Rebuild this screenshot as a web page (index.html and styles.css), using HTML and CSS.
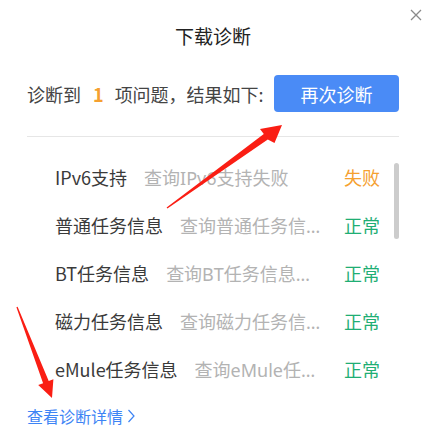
FILE: index.html
```html
<!DOCTYPE html>
<html lang="zh-CN">
<head>
<meta charset="utf-8">
<title>下载诊断</title>
<link rel="stylesheet" href="styles.css">
</head>
<body>
<div class="dialog">
  <button class="close" aria-label="关闭">
    <svg width="12" height="12" viewBox="0 0 12 12"><path d="M1 1L11 11M11 1L1 11" stroke="#8a8a8a" stroke-width="1.3" fill="none"/></svg>
  </button>
  <h1 class="title">下载诊断</h1>
  <div class="summary">
    <p class="summary-text">诊断到<span class="count">1</span>项问题，结果如下:</p>
    <button class="retry">再次诊断</button>
  </div>
  <div class="list">
    <ul class="rows">
      <li class="row"><span class="name">IPv6支持</span><span class="desc">查询IPv6支持失败</span><span class="status fail">失败</span></li>
      <li class="row"><span class="name">普通任务信息</span><span class="desc">查询普通任务信息成功</span><span class="status ok">正常</span></li>
      <li class="row"><span class="name">BT任务信息</span><span class="desc">查询BT任务信息成功</span><span class="status ok">正常</span></li>
      <li class="row"><span class="name">磁力任务信息</span><span class="desc">查询磁力任务信息成功</span><span class="status ok">正常</span></li>
      <li class="row"><span class="name">eMule任务信息</span><span class="desc">查询eMule任务信息成功</span><span class="status ok">正常</span></li>
    </ul>
    <div class="scrollbar"><div class="thumb"></div></div>
  </div>
  <a class="detail-link" href="#">查看诊断详情<svg class="chev" width="8" height="14" viewBox="0 0 8 14"><path d="M1.5 1L7 7L1.5 13" stroke="#3d84f5" stroke-width="1.2" fill="none"/></svg></a>
  <svg class="annotations" width="426" height="428" viewBox="0 0 426 428">
    <polygon fill="#fa1e14" points="166.6,207.5 263.8,133.9 260,129 282,125 274.5,143 267.8,139.5 167.4,208.5"/>
    <polygon fill="#fa1e14" points="16.4,307.2 17.6,306.8 48.7,381 53.4,379.2 52,398 38.2,385 43.1,383.2"/>
  </svg>
</div>
</body>
</html>
```

FILE: styles.css
```css
html, body {
  margin: 0;
  padding: 0;
  background: #ffffff;
}
body {
  width: 426px;
  height: 428px;
  overflow: hidden;
  font-family: "Noto Sans CJK SC", "Noto Sans", sans-serif;
}
.dialog {
  position: relative;
  width: 426px;
  height: 428px;
  padding: 0 27px;
  box-sizing: border-box;
}
.close {
  position: absolute;
  top: 8px;
  right: 3px;
  width: 14px;
  height: 14px;
  padding: 0;
  border: 0;
  background: none;
  display: flex;
  align-items: center;
  justify-content: center;
}
.title {
  margin: 0;
  padding-top: 24px;
  font-size: 19px;
  line-height: 24px;
  font-weight: normal;
  color: #222;
  text-align: center;
}
.summary {
  margin-top: 27px;
  display: flex;
  align-items: center;
  justify-content: space-between;
  padding-bottom: 24px;
  border-bottom: 1px solid #e6e6e6;
}
.summary-text {
  margin: 0;
  font-size: 18px;
  line-height: 24px;
  color: #444;
}
.count {
  color: #f5a030;
  font-weight: bold;
  padding: 0 11px 0 12px;
}
.retry {
  width: 125px;
  height: 37px;
  border: 0;
  border-radius: 4px;
  background: #4a8bf6;
  color: #fff;
  font-family: inherit;
  font-size: 18px;
  padding: 0;
}
.list {
  position: relative;
  padding-top: 16px;
}
.rows {
  list-style: none;
  margin: 0;
  padding: 0;
}
.row {
  display: flex;
  align-items: center;
  height: 48px;
  padding: 0 19px 0 28px;
  font-size: 18px;
  white-space: nowrap;
}
.name {
  color: #3a3a3a;
  flex: none;
}
.desc {
  flex: 1;
  min-width: 0;
  margin: 0 18px 0 17px;
  color: #b3b3b3;
  font-family: "Noto Sans", "Noto Sans CJK SC", sans-serif;
  overflow: hidden;
  text-overflow: ellipsis;
}
.status {
  flex: none;
  width: 36px;
}
.status.fail { color: #f5a030; }
.status.ok { color: #1fae74; }
.scrollbar {
  position: absolute;
  top: 26px;
  right: 0;
  width: 5px;
  height: 76px;
}
.thumb {
  height: 100%;
  border-radius: 3px;
  background: #cccccc;
}
.detail-link {
  display: inline-flex;
  align-items: center;
  gap: 4px;
  margin-top: 13px;
  font-size: 16px;
  line-height: 20px;
  color: #3d84f5;
  text-decoration: none;
}
.annotations {
  position: absolute;
  left: 0;
  top: 0;
  pointer-events: none;
}
```
